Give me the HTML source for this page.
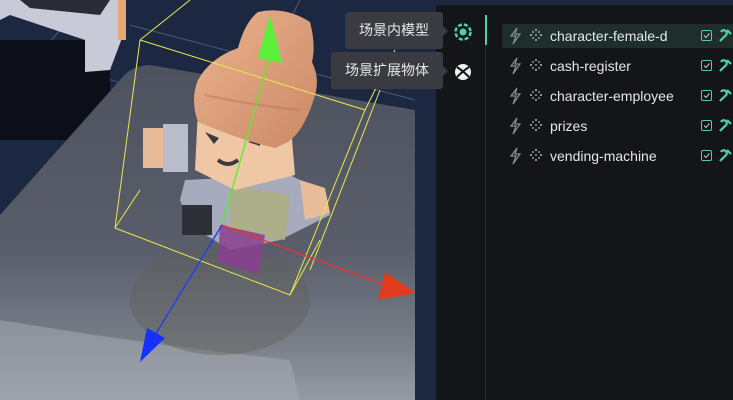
<!DOCTYPE html>
<html><head><meta charset="utf-8"><style>
*{margin:0;padding:0;box-sizing:border-box}
body{width:733px;height:400px;overflow:hidden;background:#1b2640;font-family:"Liberation Sans","Noto Sans CJK SC",sans-serif;position:relative}
#scene{position:absolute;left:0;top:0}
#panel{position:absolute;left:436px;top:5px;width:297px;height:395px;background:#141518}
.div{position:absolute;left:485px;top:15px;width:1px;height:385px;background:#2c2e33}
.acc{position:absolute;left:485px;top:15px;width:2px;height:30px;background:#4fd1a5}
.row{position:absolute;left:502px;width:231px;height:24px;color:#e6e7ea;font-size:14px;line-height:24px}
.row.sel{background:#1e2f2b}
.row span{position:absolute;left:48px;top:0}
.tip{position:absolute;height:37px;background:#3a3b40;color:#e8e8ea;font-size:14px;line-height:37px;border-radius:3px;text-align:center}
.tip:after{content:"";position:absolute;right:-5px;top:14px;border:5px solid transparent;border-right:0;border-left-color:#3a3b40}
</style></head><body>
<svg id="scene" width="436" height="400" viewBox="0 0 436 400">
<defs>
<linearGradient id="fl" x1="0" y1="0" x2="0" y2="1"><stop offset="0" stop-color="#4e525f"/><stop offset="0.55" stop-color="#595e6a"/><stop offset="0.8" stop-color="#757a85"/><stop offset="1" stop-color="#959aa4"/></linearGradient>
<linearGradient id="hair" x1="0" y1="0" x2="1" y2="1"><stop offset="0" stop-color="#eab48e"/><stop offset="1" stop-color="#cc8866"/></linearGradient>
</defs>
<rect width="436" height="400" fill="#1c2742"/>
<g stroke="#56657e" stroke-width="1" opacity="0.8"><line x1="0" y1="50" x2="130" y2="85"/><line x1="0" y1="128" x2="45" y2="138"/><line x1="60" y1="30" x2="0" y2="100"/><line x1="300" y1="0" x2="280" y2="40"/><line x1="130" y1="25" x2="415" y2="100"/></g>
<rect x="0" y="40" width="110" height="100" fill="#0c0f18"/>
<polygon points="0,0 120,0 125,30 110,70 85,72 85,40 10,15 0,20" fill="#c8cad8"/>
<polygon points="20,0 110,0 100,15 30,8" fill="#2a2c35"/>
<rect x="118" y="0" width="8" height="40" fill="#e6a874"/>
<path d="M150,65 L415,110 L415,400 L0,400 L0,215 L120,80 Q130,66 150,65Z" fill="url(#fl)"/>
<path d="M0,320 Q150,345 290,360 L300,400 0,400Z" fill="#a6aab3" opacity="0.55"/>
<ellipse cx="220" cy="300" rx="90" ry="55" fill="#5f5f58" opacity="0.4"/>
<polygon points="185,180 290,175 320,190 330,215 300,230 280,240 230,250 190,225 180,200" fill="#a7abbd"/>
<polygon points="230,185 290,195 285,240 230,235" fill="#aeaf85" opacity="0.9"/>
<rect x="182" y="205" width="30" height="30" fill="#2e3038"/>
<polygon points="220,225 265,235 258,275 218,262" fill="#8a4090" opacity="0.85"/>
<rect x="143" y="128" width="35" height="40" fill="#e7bb98"/>
<rect x="163" y="124" width="25" height="48" fill="#b8bccb"/>
<polygon points="300,180 325,188 330,213 305,220" fill="#eabd9a"/>
<polygon points="198,110 290,115 295,175 235,190 195,170" fill="#f0c7a4"/>
<path d="M205,132 l14,6 -5,6z M248,142 l12,-4 0,8z" fill="#3c3a40"/>
<path d="M218,160 q10,8 20,0" stroke="#3c3a40" stroke-width="4" fill="none"/>
<path d="M258,12 Q285,6 310,22 Q316,45 312,62 Q320,78 315,95 Q305,130 288,142 L275,148 Q240,140 198,122 Q190,100 198,80 Q210,58 238,48 Q245,22 258,12Z" fill="url(#hair)"/>
<path d="M205,95 Q250,105 300,110" stroke="#b77658" stroke-width="2" fill="none" opacity="0.5"/>
<g stroke="#ece84a" stroke-width="1" fill="none">
<polyline points="140,40 365,110 290,295 115,228 140,40"/>
<line x1="140" y1="40" x2="190" y2="0"/>
<line x1="365" y1="110" x2="395" y2="50"/>
<line x1="290" y1="295" x2="320" y2="240"/>
<line x1="115" y1="228" x2="140" y2="190"/>
<line x1="380" y1="90" x2="310" y2="270"/>
</g>
<line x1="222" y1="225" x2="276" y2="35" stroke="#52f030" stroke-width="1.3"/>
<polygon points="270,15 258,58 282,63" fill="#5af03a"/>
<line x1="222" y1="225" x2="385" y2="285" stroke="#e8352a" stroke-width="1.3"/>
<polygon points="416,293 385,272 378,300" fill="#e23a1c"/>
<line x1="222" y1="225" x2="152" y2="340" stroke="#1a3cff" stroke-width="1.3"/>
<polygon points="140,362 147,328 165,338" fill="#1530ff"/>
</svg>
<div id="panel"></div>
<div class="div"></div><div class="acc"></div>
<svg style="position:absolute;left:453px;top:22px" width="20" height="20" viewBox="0 0 20 20"><circle cx="10" cy="10" r="7.5" fill="none" stroke="#4fd1a5" stroke-width="2.5" stroke-dasharray="4 2"/><circle cx="10" cy="10" r="3.5" fill="#4fd1a5"/></svg>
<svg style="position:absolute;left:453px;top:62px" width="20" height="20" viewBox="0 0 20 20"><circle cx="10" cy="10" r="8" fill="#f2f2f2"/><path d="M4,5 Q10,9 16,15 M16,5 Q10,9 4,15" stroke="#141518" stroke-width="2" fill="none"/></svg>
<div class="tip" style="left:345px;top:12px;width:98px">场景内模型</div>
<div class="tip" style="left:331px;top:52px;width:112px">场景扩展物体</div>
<div class="row sel" style="top:24px"></div>
<div class="row" style="top:24px"><span>character-female-d</span></div>
<div class="row" style="top:54px"><span>cash-register</span></div>
<div class="row" style="top:84px"><span>character-employee</span></div>
<div class="row" style="top:114px"><span>prizes</span></div>
<div class="row" style="top:144px"><span>vending-machine</span></div>
<svg style="position:absolute;left:502px;top:24px" width="231" height="150">
<g id="r">
<path d="M15,4 L9,12 L14,12 L11,20 L18,10 L13,10 Z" fill="none" stroke="#8a8d94" stroke-width="1.2"/>
<g fill="#b8bac0"><circle cx="34" cy="6" r="1"/><circle cx="34" cy="16" r="1"/><circle cx="29" cy="11" r="1"/><circle cx="39" cy="11" r="1"/><circle cx="31" cy="8" r="0.9"/><circle cx="37" cy="8" r="0.9"/><circle cx="31" cy="14" r="0.9"/><circle cx="37" cy="14" r="0.9"/><circle cx="34" cy="11" r="0.9"/></g>
<rect x="199.5" y="6.5" width="10" height="10" rx="1.5" fill="none" stroke="#4fd1a5" stroke-width="1"/>
<path d="M202,11.5 l2,2 l3.5,-4" stroke="#c8cad0" fill="none" stroke-width="1"/>
<path d="M218,17 l5,-5 a3,3 0 1 0 -4,-4 M225,6 l4,4" stroke="#4fd1a5" stroke-width="2.2" fill="none"/>
</g>
<use href="#r" y="30"/><use href="#r" y="60"/><use href="#r" y="90"/><use href="#r" y="120"/>
</svg>
</body></html>
